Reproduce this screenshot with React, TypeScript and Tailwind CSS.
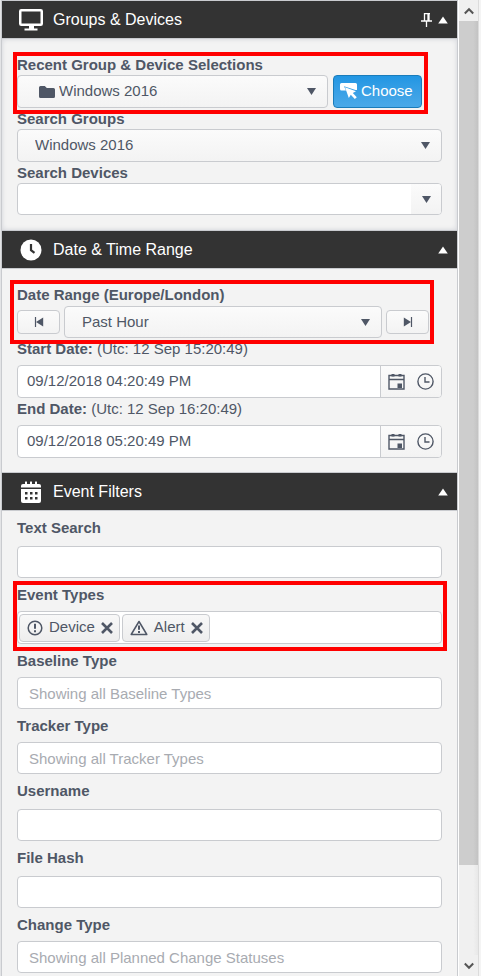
import type { ReactNode } from "react";

const control =
  "w-full rounded-[4px] border border-[#c9cbcf] text-[15px] text-[#4f5766] outline-none";
const label = "block text-[15px] font-bold text-[#4f5766]";
const softFill = "bg-linear-to-b from-[#fbfbfb] to-[#f3f3f3]";

function MonitorIcon() {
  return (
    <svg width="24" height="22" viewBox="0 0 24 22" fill="none" aria-hidden="true">
      <rect x="1.250" y="1.250" width="21.500" height="14.500" rx="1" stroke="#fff" strokeWidth="2.500" />
      <path d="M10 16h5v3.500h3.500V21.500H5.500v-2H10z" fill="#fff" />
    </svg>
  );
}

function ClockSolidIcon() {
  return (
    <svg width="22" height="22" viewBox="0 0 22 22" aria-hidden="true">
      <circle cx="11" cy="11" r="10.500" fill="#fff" />
      <path d="M11 5v6.200l3.500 2.600" fill="none" stroke="#333" strokeWidth="2.200" />
    </svg>
  );
}

function CalendarSolidIcon() {
  return (
    <svg width="20" height="22" viewBox="0 0 20 22" aria-hidden="true">
      <path d="M4 1q1-1.500 2 0v2h3V1q1-1.500 2 0v2h3V1q1-1.500 2 0v2h2a2 2 0 0 1 2 2v1.500H0V5a2 2 0 0 1 2-2h2z" fill="#fff" />
      <path d="M0 8h20v12a2 2 0 0 1-2 2H2a2 2 0 0 1-2-2z" fill="#fff" />
      <path
        d="M4 11h2.500v2.500H4zM9 11h2.500v2.500H9zM14 11h2.500v2.500H14zM4 16h2.500v2.500H4zM9 16h2.500v2.500H9zM14 16h2.500v2.500H14z"
        fill="#333"
      />
    </svg>
  );
}

function PinIcon() {
  return (
    <svg width="12" height="14" viewBox="0 0 12 14" aria-hidden="true">
      <path d="M3 .5h6M3.500 0v8M8 0v8M7 0v8M0 8h11M5.500 8v6" fill="none" stroke="#fff" strokeWidth="1.300" />
    </svg>
  );
}

function UpTriangle() {
  return (
    <svg width="10" height="8" viewBox="0 0 10 8" aria-hidden="true">
      <path d="M5 .5 9.800 7.500H.2z" fill="#fff" />
    </svg>
  );
}

function DownTriangle() {
  return (
    <svg width="9" height="7" viewBox="0 0 9 7" aria-hidden="true">
      <path d="M0 0h9L4.500 7z" fill="#4f5766" />
    </svg>
  );
}

function SkipIcon({ forward }: { forward?: boolean }) {
  return (
    <svg width="10" height="10" viewBox="0 0 10 10" className={forward ? "rotate-180" : ""} aria-hidden="true">
      <path d="M1.500 0v10" stroke="#4f5766" strokeWidth="1.200" />
      <path d="M9.200 .6v8.800L2 5z" fill="#4f5766" />
    </svg>
  );
}

function CalendarIcon() {
  return (
    <svg width="17" height="17" viewBox="0 0 17 17" fill="none" aria-hidden="true">
      <path d="M1 2.500h15v13.500H1zM1 6.500h15" stroke="#4f5766" strokeWidth="1.400" />
      <path d="M3.500 1h3v2.500h-3zM10.500 1h3v2.500h-3zM9.500 10.500H14V15H9.500z" fill="#4f5766" />
    </svg>
  );
}

function ClockIcon() {
  return (
    <svg width="17" height="17" viewBox="0 0 17 17" fill="none" stroke="#4f5766" strokeWidth="1.400" aria-hidden="true">
      <circle cx="8.500" cy="8.500" r="7.600" />
      <path d="M8 4v5h4.500" />
    </svg>
  );
}

function ChooseIcon() {
  return (
    <svg width="18" height="17" viewBox="0 0 18 17" aria-hidden="true">
      <path d="M1.500 0h14A1.500 1.500 0 0 1 17 1.500V7h-1.500L4 3.200 6 7.500H1.500A1.500 1.500 0 0 1 0 6V1.500A1.500 1.500 0 0 1 1.500 0z" fill="#fff" />
      <path d="m5 4.300 11 4-3.200 1.700 4 4.200-2 1.800-4-4.300-2 3.300z" fill="#fff" />
    </svg>
  );
}

function FolderIcon() {
  return (
    <svg width="16" height="12" viewBox="0 0 16 12" aria-hidden="true">
      <path d="M1.500 0h4.300l2 2h6.700A1.500 1.500 0 0 1 16 3.500v7a1.500 1.500 0 0 1-1.500 1.500h-13A1.500 1.500 0 0 1 0 10.500v-9A1.500 1.500 0 0 1 1.500 0z" fill="#4f5766" />
    </svg>
  );
}

function DeviceEventIcon() {
  return (
    <svg width="16" height="16" viewBox="0 0 16 16" fill="none" stroke="#4f5766" aria-hidden="true">
      <circle cx="8" cy="8" r="6.800" strokeWidth="1.500" />
      <path d="M8 3.800v5M8 10.200v2" strokeWidth="2" />
    </svg>
  );
}

function AlertEventIcon() {
  return (
    <svg width="18" height="16" viewBox="0 0 18 16" fill="none" stroke="#4f5766" aria-hidden="true">
      <path d="M9 1.500 16.800 14.500H1.200z" strokeWidth="1.500" strokeLinejoin="round" />
      <path d="M9 5.500v4.200M9 11v2" strokeWidth="2" />
    </svg>
  );
}

function CrossIcon() {
  return (
    <svg width="12" height="12" viewBox="0 0 12 12" aria-hidden="true">
      <path d="m1 1 10 10M11 1 1 11" stroke="#4f5766" strokeWidth="2.600" />
    </svg>
  );
}

function Section({
  title,
  icon,
  pinned,
  bodyClass,
  children,
}: {
  title: string;
  icon: ReactNode;
  pinned?: boolean;
  bodyClass: string;
  children: ReactNode;
}) {
  return (
    <section>
      <header className="flex h-[39px] items-center border-y border-[#c9cbcf] bg-[#333333] pr-[9px] pl-4 text-white">
        <span className="flex w-[26px] justify-center">{icon}</span>
        <h2 className="ml-[9px] flex-1 text-base">{title}</h2>
        {pinned && (
          <button type="button" aria-label="Pin panel" className="mr-[5px]">
            <PinIcon />
          </button>
        )}
        <button type="button" aria-label={`Collapse ${title}`}>
          <UpTriangle />
        </button>
      </header>
      <div className={`relative px-[15px] ${bodyClass}`}>{children}</div>
    </section>
  );
}

function Dropdown({
  id,
  value,
  height,
  icon,
}: {
  id: string;
  value: string;
  height: string;
  icon?: ReactNode;
}) {
  return (
    <div className="relative min-w-0 flex-1">
      <select
        id={id}
        defaultValue={value}
        className={`${control} ${softFill} ${height} block appearance-none pr-8 ${icon ? "pl-[41px]" : "pl-[17px]"}`}
      >
        <option>{value}</option>
      </select>
      {icon && <span className="pointer-events-none absolute inset-y-0 left-[22px] flex items-center">{icon}</span>}
      <span className="pointer-events-none absolute inset-y-0 right-3 flex items-center">
        <DownTriangle />
      </span>
    </div>
  );
}

function DateField({ id, name, utc, value }: { id: string; name: string; utc: string; value: string }) {
  return (
    <div>
      <label htmlFor={id} className="block h-[27px] text-[15px] leading-[21px] text-[#4f5766]">
        <b>{name}</b> {utc}
      </label>
      <div className={`${control} flex h-[33px] overflow-hidden bg-white`}>
        <input id={id} defaultValue={value} className="min-w-0 flex-1 px-[9px] outline-none" />
        <div className={`flex w-[61px] items-center gap-3 border-l border-[#c9cbcf] pl-[7px] ${softFill}`}>
          <button type="button" aria-label={`${name} calendar`}>
            <CalendarIcon />
          </button>
          <button type="button" aria-label={`${name} time`}>
            <ClockIcon />
          </button>
        </div>
      </div>
    </div>
  );
}

function TextField({ id, name, placeholder }: { id: string; name: string; placeholder?: string }) {
  return (
    <div className={`flex flex-col ${placeholder ? "gap-[6px]" : "gap-2"}`}>
      <label htmlFor={id} className={`${label} leading-5`}>
        {name}
      </label>
      <input
        id={id}
        placeholder={placeholder}
        className={`${control} h-8 bg-white px-[11px] placeholder:text-[#a8abb1]`}
      />
    </div>
  );
}

function Chip({ name, icon }: { name: string; icon: ReactNode }) {
  return (
    <span className="flex h-7 items-center rounded-[4px] border border-[#c9cbcf] bg-linear-to-b from-[#f8f8f8] to-[#eeeeee] pr-[6px] pl-[7px]">
      {icon}
      <span className="mx-[6px]">{name}</span>
      <button type="button" aria-label={`Remove ${name}`}>
        <CrossIcon />
      </button>
    </span>
  );
}

function Highlight({ place }: { place: string }) {
  return <div className={`pointer-events-none absolute z-10 border-4 border-[#ff0000] ${place}`} />;
}

function Scrollbar() {
  return (
    <div className="ml-px flex w-[19px] shrink-0 flex-col bg-[#f0f0f0]" aria-hidden="true">
      <div className="flex h-[21px] items-center justify-center">
        <svg width="10" height="8" viewBox="0 0 10 8">
          <path d="M.8 6.500 5 2.200l4.200 4.300" fill="none" stroke="#555" strokeWidth="2" />
        </svg>
      </div>
      <div className="flex-1 bg-linear-to-r from-[#cdcdcd] from-75% to-[#c3c3c3]" />
      <div className="h-[90px] bg-linear-to-r from-[#f0f0f0] from-75% to-[#e8e8e8]" />
      <div className="flex h-[21px] items-center justify-center">
        <svg width="10" height="8" viewBox="0 0 10 8">
          <path d="M.8 1.500 5 5.800l4.200-4.300" fill="none" stroke="#555" strokeWidth="2" />
        </svg>
      </div>
    </div>
  );
}

export default function App() {
  return (
    <div className="flex h-screen overflow-hidden bg-white font-['Liberation_Sans',Arial,sans-serif]">
      <div className="w-px shrink-0 bg-[#e3e4e6]" />
      <main className="min-w-0 flex-1 overflow-hidden border-x border-[#c9cbcf] bg-[#f3f3f3]">
        <Section
          title="Groups & Devices"
          icon={<MonitorIcon />}
          pinned
          bodyClass="pt-[15px] pb-[15px] shadow-[inset_0_0_5px_#d0d2d8]"
        >
          <Highlight place="top-[13px] right-[29px] left-[11px] h-[62px]" />
          <label htmlFor="recent" className={`${label} leading-[21px]`}>
            Recent Group &amp; Device Selections
          </label>
          <div className="flex gap-[5px] pr-5">
            <Dropdown id="recent" value="Windows 2016" height="h-[33px]" icon={<FolderIcon />} />
            <button
              type="button"
              className="flex h-[33px] w-[89px] items-center rounded-[4px] border border-[#1a7cba] bg-linear-to-b from-[#2196e3] to-[#4aa9e8] pl-[6px] text-[15px] text-white"
            >
              <ChooseIcon />
              <span className="ml-[3px]">Choose</span>
            </button>
          </div>
          <label htmlFor="groups" className={`${label} leading-[21px]`}>
            Search Groups
          </label>
          <Dropdown id="groups" value="Windows 2016" height="h-[33px]" />
          <label htmlFor="devices" className={`${label} leading-[21px]`}>
            Search Devices
          </label>
          <div className={`${control} flex h-8 overflow-hidden bg-white`}>
            <input id="devices" className="min-w-0 flex-1 px-[17px] outline-none" />
            <button
              type="button"
              aria-label="Show devices"
              className={`flex w-[30px] items-center justify-center ${softFill}`}
            >
              <DownTriangle />
            </button>
          </div>
        </Section>

        <Section title="Date & Time Range" icon={<ClockSolidIcon />} bodyClass="pt-[15px] pb-[14px]">
          <Highlight place="top-[11px] right-[23px] left-[8px] h-[64px]" />
          <label htmlFor="range" className={`${label} pb-px leading-[21px]`}>
            Date Range (Europe/London)
          </label>
          <div className="flex items-center gap-1 pr-[13px]">
            <button
              type="button"
              aria-label="Previous range"
              className={`flex h-6 w-[43px] items-center justify-center rounded-[4px] border border-[#c9cbcf] ${softFill}`}
            >
              <SkipIcon />
            </button>
            <Dropdown id="range" value="Past Hour" height="h-8" />
            <button
              type="button"
              aria-label="Next range"
              className={`flex h-6 w-[43px] items-center justify-center rounded-[4px] border border-[#c9cbcf] ${softFill}`}
            >
              <SkipIcon forward />
            </button>
          </div>
          <DateField id="start" name="Start Date:" utc="(Utc: 12 Sep 15:20:49)" value="09/12/2018 04:20:49 PM" />
          <DateField id="end" name="End Date:" utc="(Utc: 12 Sep 16:20:49)" value="09/12/2018 05:20:49 PM" />
        </Section>

        <Section title="Event Filters" icon={<CalendarSolidIcon />} bodyClass="flex flex-col gap-[7px] pt-[7px] pb-4">
          <Highlight place="top-[70px] right-[10px] left-[11px] h-[70px]" />
          <TextField id="text" name="Text Search" />
          <div className="flex flex-col gap-[6px]">
            <label htmlFor="types" className={`${label} leading-5`}>
              Event Types
            </label>
            <div className={`${control} flex h-[33px] items-center gap-[2px] bg-white px-px`}>
              <Chip name="Device" icon={<DeviceEventIcon />} />
              <Chip name="Alert" icon={<AlertEventIcon />} />
              <input id="types" className="min-w-0 flex-1 outline-none" />
            </div>
          </div>
          <TextField id="baseline" name="Baseline Type" placeholder="Showing all Baseline Types" />
          <TextField id="tracker" name="Tracker Type" placeholder="Showing all Tracker Types" />
          <TextField id="username" name="Username" />
          <TextField id="hash" name="File Hash" />
          <TextField id="change" name="Change Type" placeholder="Showing all Planned Change Statuses" />
        </Section>
      </main>
      <Scrollbar />
      <div className="w-[3px] shrink-0 border-l border-[#dcdcdc] bg-[#f4f4f4]" />
    </div>
  );
}
